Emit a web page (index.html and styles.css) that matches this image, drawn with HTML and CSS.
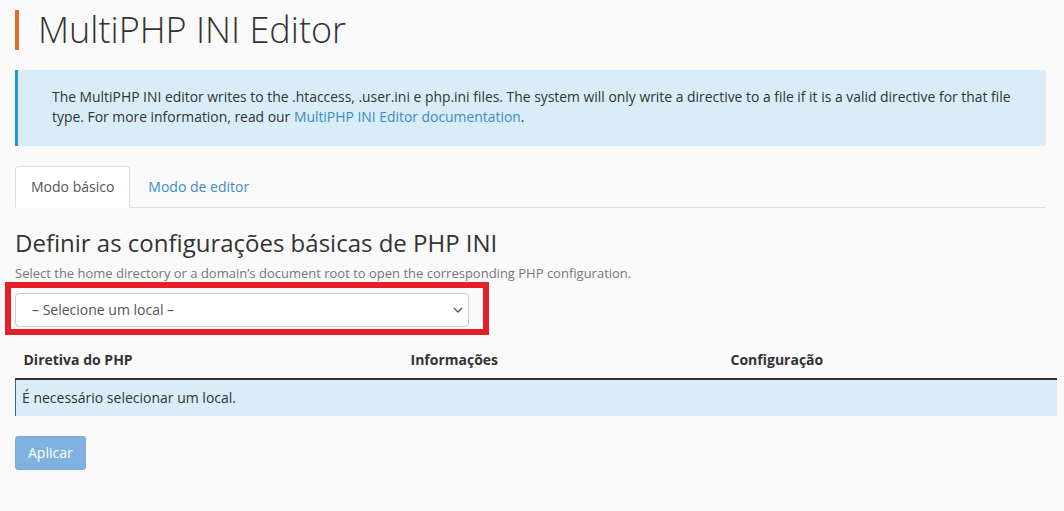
FILE: index.html
```html
<!DOCTYPE html>
<html lang="pt">
<head>
<meta charset="utf-8">
<title>MultiPHP INI Editor</title>
<link rel="stylesheet" href="styles.css">
</head>
<body>
<div class="page">
  <h1 class="page-title">MultiPHP INI Editor</h1>
  <div class="info-box">
    The MultiPHP INI editor writes to the .htaccess, .user.ini e php.ini files. The system will only write a directive to a file if it is a valid directive for that file type. For more information, read our <a href="#" class="link">MultiPHP INI Editor documentation</a>.
  </div>
  <ul class="tabs">
    <li class="tab active">Modo básico</li>
    <li class="tab"><a href="#" class="link">Modo de editor</a></li>
  </ul>
  <h2 class="section-title">Definir as configurações básicas de PHP INI</h2>
  <p class="help">Select the home directory or a domain’s document root to open the corresponding PHP configuration.</p>
  <div class="select-wrap">
    <div class="select">
      <span>– Selecione um local –</span>
      <svg class="chevron" width="10" height="6" viewBox="0 0 10 6"><path d="M1 1 L5 5 L9 1" fill="none" stroke="#555" stroke-width="1.3"/></svg>
    </div>
    <div class="highlight"></div>
  </div>
  <table class="directives">
    <thead>
      <tr>
        <th class="col-1">Diretiva do PHP</th>
        <th class="col-2">Informações</th>
        <th>Configuração</th>
      </tr>
    </thead>
    <tbody>
      <tr class="info-row">
        <td colspan="3">É necessário selecionar um local.</td>
      </tr>
    </tbody>
  </table>
  <button class="btn" disabled>Aplicar</button>
</div>
</body>
</html>
```
FILE: styles.css
```css
html, body {
  margin: 0;
  padding: 0;
  background: #fafafa;
}
body {
  font-family: "Open Sans", "Liberation Sans", sans-serif;
  font-size: 14px;
  line-height: 20px;
  color: #333;
}
.page {
  padding: 10px 18px 0 15px;
}
.page-title {
  margin: 0 0 20px 0;
  border-left: 4px solid #e8692e;
  padding-left: 19px;
  font-weight: 300;
  font-size: 36px;
  line-height: 40px;
  height: 40px;
  color: #333;
}
.info-box {
  background: #d9edf8;
  border-left: 3px solid #1b9ad1;
  padding: 17px 14px 19px 34px;
  line-height: 20px;
  font-size: 13.9px;
  color: #333;
}
.link {
  color: #3d8ac6;
  text-decoration: none;
}
.tabs {
  list-style: none;
  margin: 20px 0 0 0;
  padding: 0;
  display: flex;
  border-bottom: 1px solid #ddd;
}
.tab {
  padding: 10px 15px;
  margin-right: 2px;
  margin-bottom: -1px;
  border: 1px solid transparent;
  border-radius: 4px 4px 0 0;
  line-height: 20px;
}
.tab.active {
  background: #fff;
  border-color: #ddd;
  border-bottom-color: #fff;
  color: #555;
}
.section-title {
  margin: 21px 0 7px 0;
  font-weight: 400;
  font-size: 24px;
  line-height: 28px;
  color: #333;
}
.help {
  margin: 0 0 11px 0;
  font-size: 13px;
  line-height: 18px;
  color: #777;
}
.select-wrap {
  position: relative;
  width: 454px;
}
.select {
  height: 32px;
  border: 1px solid #ccc;
  border-radius: 4px;
  background: #fff;
  display: flex;
  align-items: center;
  justify-content: space-between;
  padding: 0 5px 0 16px;
  color: #555;
}
.highlight {
  position: absolute;
  top: -11px;
  left: -10px;
  right: -20px;
  bottom: -8px;
  border: 6px solid #e3202a;
  pointer-events: none;
}
.directives {
  margin-top: 15px;
  width: 1042px;
  border-collapse: collapse;
}
.directives th {
  text-align: left;
  font-weight: 700;
  padding: 8px 8px;
  line-height: 20px;
  border-bottom: 2px solid #2e3238;
  color: #333;
}
.col-1 { width: 371px; }
.col-2 { width: 304px; }
.info-row td {
  background: #d9edf8;
  border-left: 1px solid #2f6b82;
  padding: 8px 6px;
  line-height: 20px;
  color: #333;
}
.btn {
  margin-top: 20px;
  font-family: "Open Sans", "Liberation Sans", sans-serif;
  font-size: 14px;
  line-height: 20px;
  padding: 6px 12px;
  border: 1px solid #79acd8;
  border-radius: 3px;
  background: #7fb2de;
  color: #fff;
}
```
